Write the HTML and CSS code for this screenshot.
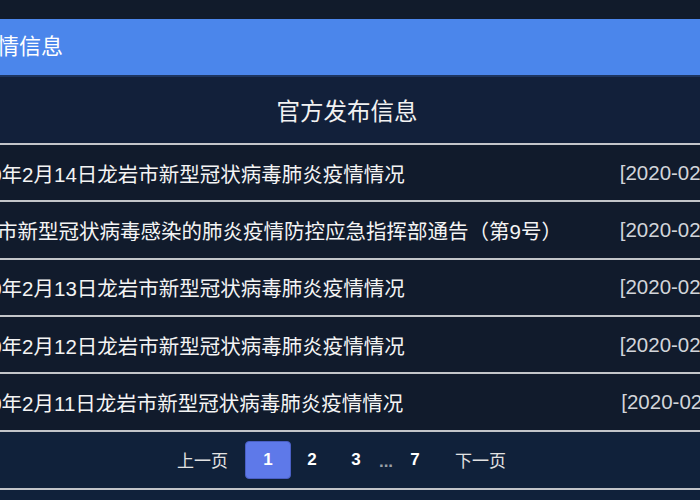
FILE: index.html
```html
<!DOCTYPE html>
<html lang="zh-CN">
<head>
<meta charset="utf-8">
<title>疫情信息</title>
<link rel="stylesheet" href="styles.css">
</head>
<body>
<div class="page">
  <div class="head">疫情信息</div>
  <div class="title">官方发布信息</div>
  <ul class="list">
    <li class="row"><span class="txt">2020年2月14日龙岩市新型冠状病毒肺炎疫情情况</span><span class="date">[2020-02-14]</span></li>
    <li class="row"><span class="txt">龙岩市新型冠状病毒感染的肺炎疫情防控应急指挥部通告（第9号）</span><span class="date">[2020-02-13]</span></li>
    <li class="row"><span class="txt">2020年2月13日龙岩市新型冠状病毒肺炎疫情情况</span><span class="date">[2020-02-13]</span></li>
    <li class="row"><span class="txt">2020年2月12日龙岩市新型冠状病毒肺炎疫情情况</span><span class="date">[2020-02-12]</span></li>
    <li class="row"><span class="txt">2020年2月11日龙岩市新型冠状病毒肺炎疫情情况</span><span class="date">[2020-02-11]</span></li>
  </ul>
  <div class="pager">
    <span class="prev">上一页</span>
    <span class="pg active">1</span>
    <span class="pg p2">2</span>
    <span class="pg p3">3</span>
    <span class="dots">...</span>
    <span class="pg p7">7</span>
    <span class="next">下一页</span>
  </div>
</div>
</body>
</html>
```

FILE: styles.css
```css
html, body {
  margin: 0;
  padding: 0;
}
body {
  background: #111b2b;
  padding-top: 19px;
  overflow: hidden;
  height: 500px;
  box-sizing: border-box;
  font-family: "Liberation Sans", "Noto Sans CJK SC", sans-serif;
}
.page {
  width: 782px;
  margin-left: -44px;
  background: #10213a;
  height: 481px;
}
.head {
  height: 58px;
  box-sizing: border-box;
  background: #4b86eb;
  border-bottom: 2px solid #1d355f;
  color: #ffffff;
  font-size: 22px;
  display: flex;
  align-items: center;
  padding-left: 19px;
  padding-bottom: 6px;
}
.title {
  height: 66px;
  background: #12203a;
  color: #f2f2f2;
  font-size: 23.5px;
  display: flex;
  align-items: center;
  justify-content: center;
}
.list {
  list-style: none;
  margin: 0;
  padding: 0;
}
.row {
  height: 55.33px;
  border-top: 2px solid #c3c5c9;
  background: #111b2c;
  display: flex;
  align-items: center;
  justify-content: space-between;
  padding-right: 2px;
  font-size: 20.5px;
}
.txt {
  color: #f4f4f4;
  white-space: nowrap;
}
.date {
  color: #d2d5da;
  white-space: nowrap;
}
.pager {
  height: 56.33px;
  border-top: 2px solid #c3c5c9;
  border-bottom: 2px solid #c3c5c9;
  background: #10213a;
  display: flex;
  align-items: center;
  padding-left: 221px;
  color: #e2e2e2;
  font-size: 17px;
}
.prev {
  width: 51px;
  margin-right: 17px;
  white-space: nowrap;
}
.pg {
  height: 38px;
  width: 42px;
  display: flex;
  align-items: center;
  justify-content: center;
  font-weight: bold;
  color: #ffffff;
  box-sizing: border-box;
}
.active {
  width: 46px;
  background: #5e79e9;
  border: 1px solid #4a5fc4;
  border-radius: 4px;
}
.p3 {
  margin-left: 2px;
}
.dots {
  width: 18px;
  text-align: center;
  color: #9aa0a8;
  font-size: 17px;
  font-weight: bold;
  padding-top: 4px;
}
.p7 {
  width: 40px;
}
.next {
  margin-left: 20px;
  white-space: nowrap;
}
```
